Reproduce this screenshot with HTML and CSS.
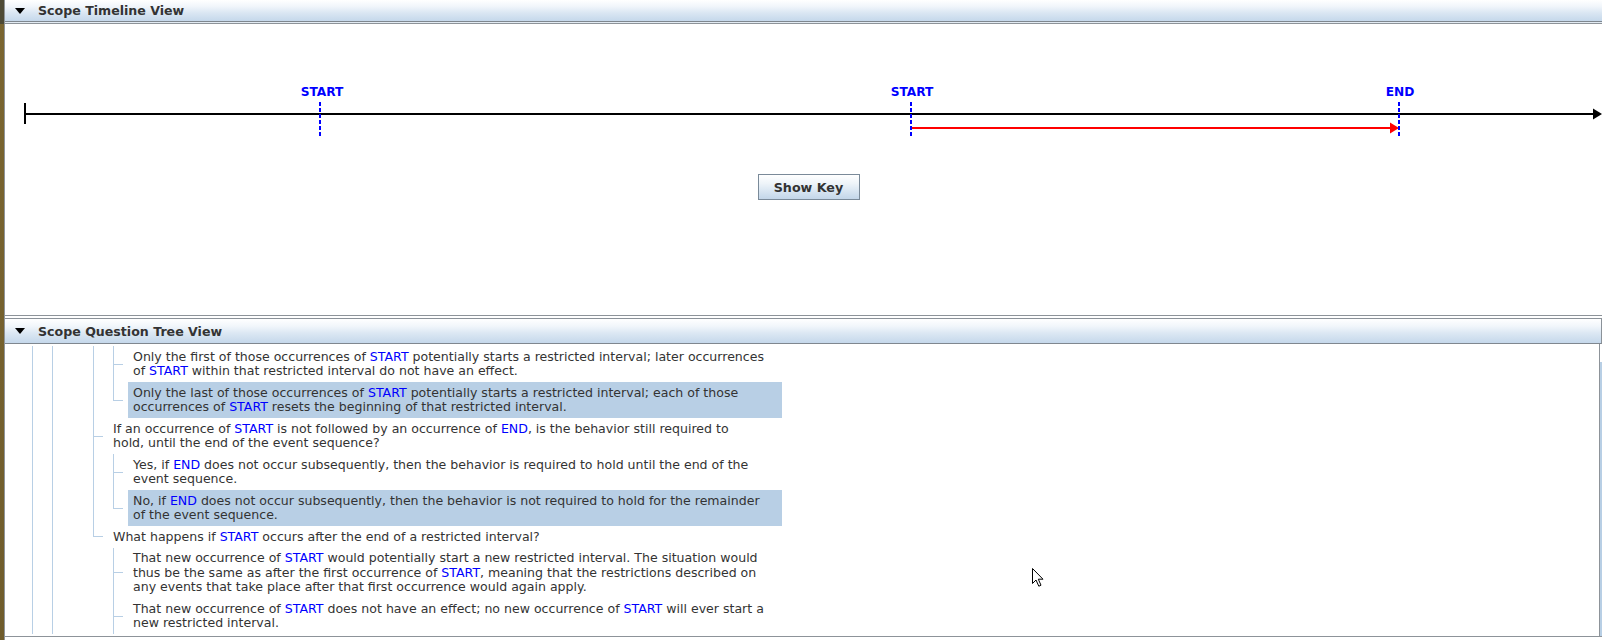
FILE: index.html
```html
<!DOCTYPE html>
<html>
<head>
<meta charset="utf-8">
<title>Scope</title>
<link rel="stylesheet" href="styles.css">
</head>
<body>
<div class="desk"></div>
<div class="app">
  <div class="hdr hdr-top"><span class="tri"></span><span class="hdr-title">Scope Timeline View</span></div>
  <div class="hdr-gap"></div>
  <div class="timeline">
    <svg class="tl-svg" width="1597" height="150" viewBox="0 0 1597 150">
      <line x1="19" y1="90" x2="1589" y2="90" stroke="#000" stroke-width="2"/>
      <line x1="20" y1="79" x2="20" y2="100" stroke="#000" stroke-width="2"/>
      <polygon points="1588,84.5 1597,90 1588,95.5" fill="#000"/>
      <line x1="907" y1="104" x2="1386" y2="104" stroke="#ff0000" stroke-width="2"/>
      <polygon points="1385,98.5 1394,104 1385,109.5" fill="#ff0000"/>
      <line x1="315" y1="78" x2="315" y2="113" class="dash"/>
      <line x1="906" y1="78" x2="906" y2="113" class="dash"/>
      <line x1="1394" y1="78" x2="1394" y2="113" class="dash"/>
      <text x="317" y="72" class="lbl">START</text>
      <text x="907" y="72" class="lbl">START</text>
      <text x="1395" y="72" class="lbl">END</text>
    </svg>
    <div class="btn-row"><button class="btn">Show Key</button></div>
  </div>
  <div class="panel-gap"></div>
  <div class="hdr hdr-second"><span class="tri"></span><span class="hdr-title">Scope Question Tree View</span></div>
  <div class="tree-wrap">
    <div class="tree">
      <div class="row">
        <span class="g g-line"></span><span class="g g-line"></span><span class="g g-empty"></span><span class="g g-line"></span><span class="g g-tee"></span>
        <div class="cell">Only the first of those occurrences of <span class="kw">START</span> potentially starts a restricted interval; later occurrences<br>of <span class="kw">START</span> within that restricted interval do not have an effect.</div>
      </div>
      <div class="row">
        <span class="g g-line"></span><span class="g g-line"></span><span class="g g-empty"></span><span class="g g-line"></span><span class="g g-ell"></span>
        <div class="cell sel">Only the last of those occurrences of <span class="kw">START</span> potentially starts a restricted interval; each of those<br>occurrences of <span class="kw">START</span> resets the beginning of that restricted interval.</div>
      </div>
      <div class="row">
        <span class="g g-line"></span><span class="g g-line"></span><span class="g g-empty"></span><span class="g g-tee"></span>
        <div class="cell">If an occurrence of <span class="kw">START</span> is not followed by an occurrence of <span class="kw">END</span>, is the behavior still required to<br>hold, until the end of the event sequence?</div>
      </div>
      <div class="row">
        <span class="g g-line"></span><span class="g g-line"></span><span class="g g-empty"></span><span class="g g-line"></span><span class="g g-tee"></span>
        <div class="cell">Yes, if <span class="kw">END</span> does not occur subsequently, then the behavior is required to hold until the end of the<br>event sequence.</div>
      </div>
      <div class="row">
        <span class="g g-line"></span><span class="g g-line"></span><span class="g g-empty"></span><span class="g g-line"></span><span class="g g-ell"></span>
        <div class="cell sel">No, if <span class="kw">END</span> does not occur subsequently, then the behavior is not required to hold for the remainder<br>of the event sequence.</div>
      </div>
      <div class="row">
        <span class="g g-line"></span><span class="g g-line"></span><span class="g g-empty"></span><span class="g g-ell"></span>
        <div class="cell">What happens if <span class="kw">START</span> occurs after the end of a restricted interval?</div>
      </div>
      <div class="row">
        <span class="g g-line"></span><span class="g g-line"></span><span class="g g-empty"></span><span class="g"></span><span class="g g-tee"></span>
        <div class="cell">That new occurrence of <span class="kw">START</span> would potentially start a new restricted interval. The situation would<br>thus be the same as after the first occurrence of <span class="kw">START</span>, meaning that the restrictions described on<br>any events that take place after that first occurrence would again apply.</div>
      </div>
      <div class="row">
        <span class="g g-line"></span><span class="g g-line"></span><span class="g g-empty"></span><span class="g"></span><span class="g g-tee"></span>
        <div class="cell">That new occurrence of <span class="kw">START</span> does not have an effect; no new occurrence of <span class="kw">START</span> will ever start a<br>new restricted interval.</div>
      </div>
    </div>
    <div class="vscroll"></div>
  </div>
</div>
<svg class="cursor" width="14" height="21" viewBox="0 0 14 21">
  <path d="M1.5 1.5 L1.5 16.5 L5 13 L7.8 19.2 L10 18.2 L7.3 12.2 L12 12.2 Z" fill="#ffffff" stroke="#000000" stroke-width="1" stroke-linejoin="miter"/>
</svg>
</body>
</html>
```
FILE: styles.css
```css
html, body {
  margin: 0;
  padding: 0;
}
body {
  width: 1602px;
  height: 640px;
  overflow: hidden;
  display: flex;
  background: #ffffff;
  font-family: "DejaVu Sans", "Liberation Sans", sans-serif;
  color: #333333;
  position: relative;
}
.desk {
  width: 4px;
  flex: none;
  background: linear-gradient(#4d4a36 0, #4d4a36 24px, #7a6530 24px, #6f5c2c 100%);
}
.app {
  flex: 1;
  display: flex;
  flex-direction: column;
  border-left: 1px solid #8f959b;
  min-width: 0;
}
.hdr {
  display: flex;
  align-items: center;
  padding-left: 10px;
  background: linear-gradient(#ffffff 0%, #f1f6fb 30%, #dbe7f3 60%, #c5d8eb 100%);
  flex: none;
}
.hdr-top {
  height: 21px;
  border-bottom: 1px solid #7f878f;
}
.hdr-second {
  height: 24px;
  border-top: 1px solid #8b9299;
  border-bottom: 1px solid #7f878f;
  border-right: 1px solid #8b9299;
}
.tri {
  width: 0;
  height: 0;
  border-left: 5px solid transparent;
  border-right: 5px solid transparent;
  border-top: 6px solid #000000;
  margin-right: 13px;
}
.hdr-title {
  font-weight: bold;
  font-size: 12.6px;
  color: #333333;
  white-space: nowrap;
}
.hdr-gap {
  height: 1px;
  background: #e3ebf3;
  flex: none;
}
.timeline {
  height: 291px;
  flex: none;
  border-top: 1px solid #8d9399;
  border-bottom: 1px solid #8d9399;
  background: #ffffff;
  display: flex;
  flex-direction: column;
}
.tl-svg {
  display: block;
  flex: none;
}
.dash {
  stroke: #0000ff;
  stroke-width: 2;
  stroke-dasharray: 4 2;
}
.lbl {
  font-family: "DejaVu Sans", sans-serif;
  font-weight: bold;
  font-size: 12.2px;
  fill: #0000ff;
  text-anchor: middle;
}
.btn-row {
  display: flex;
  justify-content: center;
  padding-left: 10px;
}
.btn {
  width: 102px;
  height: 26px;
  box-sizing: border-box;
  border: 1px solid #7a8a99;
  border-radius: 0;
  padding: 0;
  margin: 0;
  background: linear-gradient(#ffffff 0%, #eef4f9 35%, #d6e4f1 70%, #c3d6e9 100%);
  font-family: "DejaVu Sans", sans-serif;
  font-weight: bold;
  font-size: 12.7px;
  color: #333333;
}
.panel-gap {
  height: 2px;
  flex: none;
  background: #ffffff;
}
.tree-wrap {
  height: 292px;
  flex: none;
  display: flex;
  border-bottom: 1px solid #8d9399;
}
.tree {
  flex: 1;
  border-right: 1px solid #8d9399;
  padding-top: 2px;
  padding-left: 17px;
  overflow: hidden;
  background: #ffffff;
}
.vscroll {
  width: 2px;
  flex: none;
  background: linear-gradient(#ffffff 0, #ffffff 18px, #b8cfe5 18px, #b8cfe5 100%);
}
.row {
  display: flex;
  align-items: stretch;
}
.g {
  width: 20px;
  flex: none;
}
.g-empty {
  width: 21px;
}
.g-line {
  background: linear-gradient(#b8cfe5, #b8cfe5) 10px 0 / 1px 100% no-repeat;
}
.g-tee {
  background:
    linear-gradient(#b8cfe5, #b8cfe5) 10px 0 / 1px 100% no-repeat,
    linear-gradient(#b8cfe5, #b8cfe5) 10px 50% / 10px 1px no-repeat;
}
.g-ell {
  background:
    linear-gradient(#b8cfe5, #b8cfe5) 10px 0 / 1px 50% no-repeat,
    linear-gradient(#b8cfe5, #b8cfe5) 10px 50% / 10px 1px no-repeat;
}
.cell {
  margin-left: 5px;
  width: 654px;
  box-sizing: border-box;
  padding: 3.5px 5px;
  font-size: 12.55px;
  line-height: 14.5px;
  color: #333333;
  white-space: nowrap;
}
.cell.sel {
  background: #b8cfe5;
}
.kw {
  color: #0000ff;
}
.cursor {
  position: absolute;
  left: 1031px;
  top: 567px;
}
```
